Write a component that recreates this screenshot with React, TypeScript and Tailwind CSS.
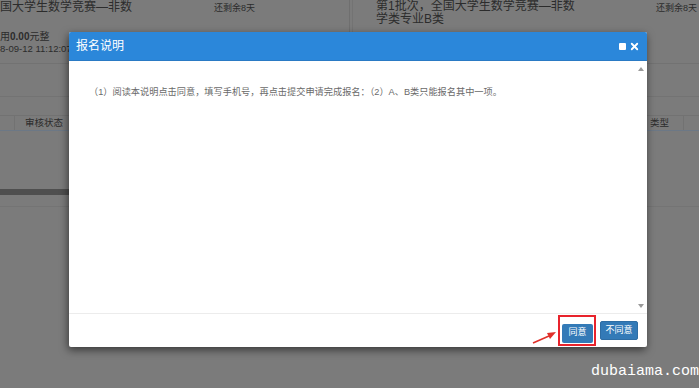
import { X } from 'lucide-react';

const cjk = '"Liberation Sans", "Noto Sans CJK SC", sans-serif';

function BackgroundPage() {
  return (
    <div className="flex flex-col w-full h-full text-[#2c2c2c]">
      <div className="flex h-[64px] border-b border-[#727272]">
        <div className="w-[350px] border-r border-[#6f6f6f] relative">
          <div className="flex items-start justify-between pr-[94px] -mt-[1px]">
            <span className="text-[12px] leading-[16px]">国大学生数学竞赛—非数</span>
            <span className="text-[9px] leading-[16px] mt-[1px]">还剩余8天</span>
          </div>
          <div className="mt-[15px] text-[10px] leading-[12px]">
            用<b>0.00</b>元整
          </div>
          <div className="text-[9.5px] leading-[12px]">8-09-12 11:12:07</div>
        </div>
        <div className="flex-1 ml-[2px] border-l border-[#737373] flex justify-between pl-[23px] pr-[2px]">
          <div className="text-[12px] leading-[13px] mt-0">
            第1批次，全国大学生数学竞赛—非数
            <br />
            学类专业B类
          </div>
          <span className="text-[9px] leading-[12px] mt-[2px]">还剩余8天</span>
        </div>
      </div>
      <div className="h-[33px] border-b border-[#737373]" />
      <div className="h-[18px]" />
      <div className="flex h-[16px] border-y border-t-[#727272] border-b-[#6c7886] text-[9.5px] leading-[14px]">
        <div className="w-[15px] border-r border-[#727272]" />
        <div className="pl-[10px] w-[70px]">审核状态</div>
        <div className="flex-1" />
        <div className="w-[40px] text-right pr-[14px]">类型</div>
        <div className="w-[16px] border-l border-[#727272]" />
      </div>
      <div className="flex h-[58px]" />
      <div className="flex h-[6px]">
        <div className="w-[80px] bg-[#4f4f4f]" />
        <div className="flex-1" />
      </div>
      <div className="flex h-[12px] border-b border-[#747474]" />
    </div>
  );
}

function Modal() {
  return (
    <div className="absolute left-[69px] top-[32px] w-[578px] h-[315px] bg-white flex flex-col rounded-[2px] shadow-[-1px_3px_8px_rgba(0,0,0,0.55)]">
      <div className="h-[29px] bg-[#2b87da] border-b border-[#2a7ac4] flex items-center justify-between pl-[7px] pr-[7px] rounded-t-[2px]">
        <span className="text-white text-[12px]">报名说明</span>
        <div className="flex items-center gap-[3px]">
          <span className="w-[7px] h-[7px] bg-white rounded-[1px]" />
          <X size={11} strokeWidth={4} color="white" />
        </div>
      </div>
      <div className="flex-1 flex relative border-b border-[#ececec]">
        <div className="flex-1 pl-[20px] pt-[25px] text-[9.2px] text-[#6a6a6a] leading-[12px]">
          （1）阅读本说明点击同意，填写手机号，再点击提交申请完成报名：（2）A、B类只能报名其中一项。
        </div>
        <div className="w-[12px] flex flex-col items-center justify-between pt-[6px] pb-[5px]">
          <svg width="6" height="4" viewBox="0 0 6 4">
            <path d="M3 0 L6 4 L0 4 Z" fill="#9a9a9a" />
          </svg>
          <svg width="6" height="4" viewBox="0 0 6 4">
            <path d="M0 0 L6 0 L3 4 Z" fill="#9a9a9a" />
          </svg>
        </div>
      </div>
      <div className="h-[33px] flex items-center justify-end pr-[9px] gap-[4px] relative">
        <svg className="absolute left-[463px] top-[15px]" width="26" height="17" viewBox="0 0 26 17">
          <path d="M1 14 L17 7" stroke="#e0302a" strokeWidth="1.6" />
          <path d="M24 3 L15 4 L18 10 Z" fill="#e0302a" />
        </svg>
        <div className="border-2 border-[#e8232c] p-[1px] pl-[2px]">
          <button className="bg-[#337ab7] text-white text-[9px] w-[31px] h-[19px] rounded-[2px]">同意</button>
        </div>
        <button className="bg-[#337ab7] text-white text-[9px] w-[38px] h-[19px] rounded-[2px] border border-[#2e6da4]">不同意</button>
      </div>
    </div>
  );
}

export default function App() {
  return (
    <div className="relative w-[699px] h-[388px] overflow-hidden bg-[#7b7b7b]" style={{ fontFamily: cjk }}>
      <BackgroundPage />
      <Modal />
      <div className="absolute right-[0px] top-[363px] text-white text-[15px] leading-[18px]" style={{ fontFamily: '"Liberation Mono", "DejaVu Sans Mono", monospace' }}>
        dubaiama.com
      </div>
    </div>
  );
}
